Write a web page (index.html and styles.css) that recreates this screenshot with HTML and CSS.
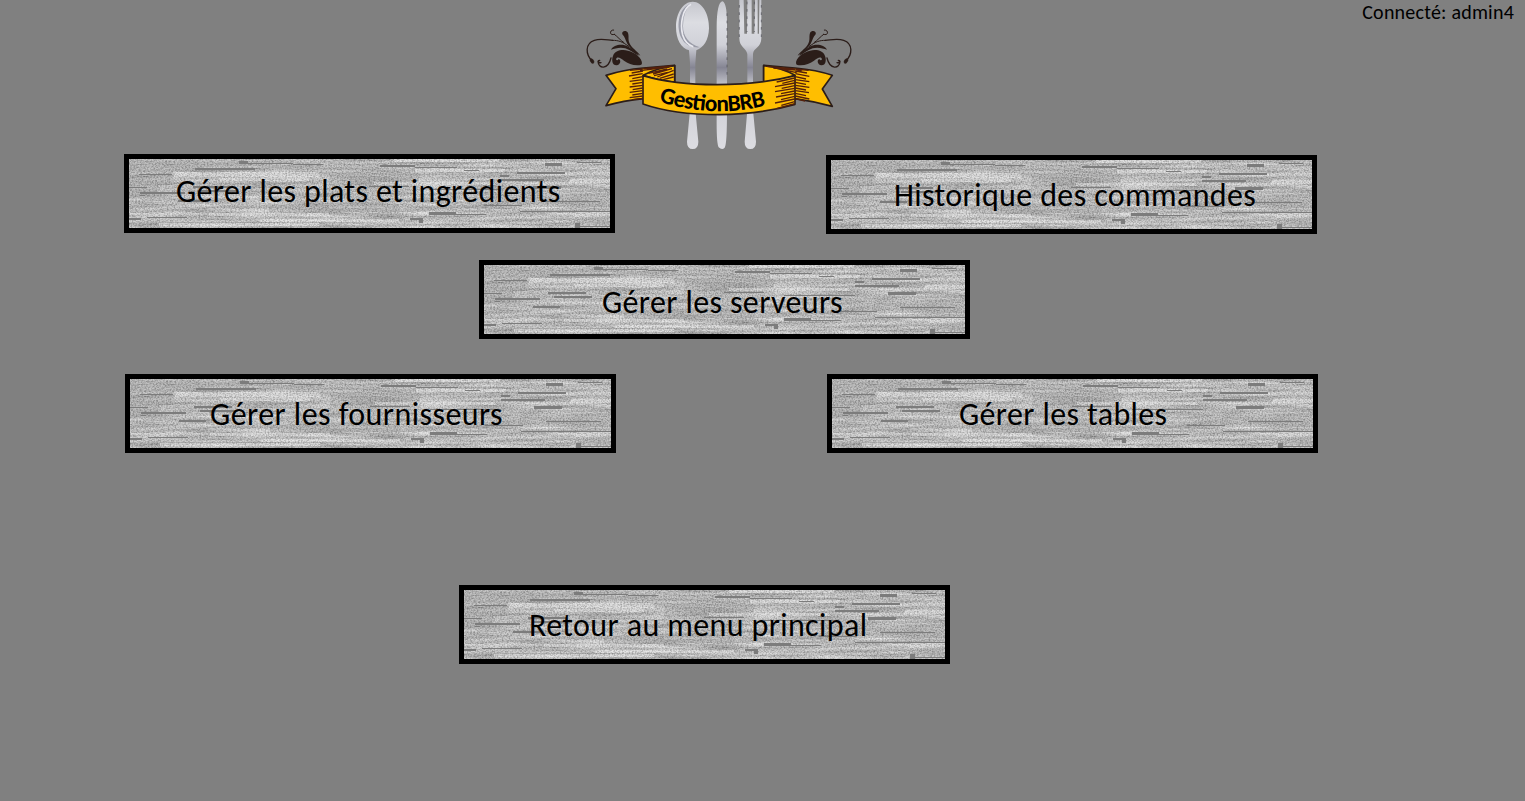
FILE: index.html
```html
<!DOCTYPE html>
<html lang="fr">
<head>
<meta charset="utf-8">
<title>GestionBRB</title>
<link rel="stylesheet" href="styles.css">
</head>
<body>
<svg class="defs" aria-hidden="true">
  <defs>
    <filter id="bands" x="0" y="0" width="100%" height="100%" color-interpolation-filters="sRGB">
      <feTurbulence type="fractalNoise" baseFrequency="0.018 0.3" numOctaves="2" seed="8"/>
      <feColorMatrix values=".42 0 0 0 0.52  .42 0 0 0 0.52  .42 0 0 0 0.52  0 0 0 0 1"/>
    </filter>
    <filter id="grain" x="0" y="0" width="100%" height="100%" color-interpolation-filters="sRGB">
      <feTurbulence type="fractalNoise" baseFrequency="0.6 0.75" numOctaves="2" seed="3"/>
      <feColorMatrix values="2.4 0 0 0 -0.52  2.4 0 0 0 -0.52  2.4 0 0 0 -0.52  0 0 0 0 1"/>
    </filter>
    <symbol id="wood" viewBox="0 0 481 69">
      <rect width="481" height="69" filter="url(#bands)"/>
      <g fill="#999" opacity=".4"><path d="M0 0h118v12H44v14H30v12H0zM390 34h91v14h-91zM160 5h90v6h-90zM200 14h90v15h-90zM140 45h130v8H140z"/></g>
      <g fill="#e8e8e8" opacity=".6"><path d="M45 13h145v5H45zM90 19h90v3H90zM265 0h105v3H265zM286 10h90v3h-90zM245 23h120v3H245zM80 54h120v3H80zM130 60h140v3H130zM440 20h41v4h-41zM444 55h37v3h-37zM30 64h160v3H30z"/></g>
      <rect width="481" height="69" filter="url(#grain)" opacity=".2"/>
      <path fill="#7c7c7c" d="M110 2h9v3h-9zM66 9h60v2H66zM118 4h46v1h-46zM164 5h30v1h-30zM251 6h35v2h-35zM286 8h42v1h-42zM335 11h15v1h-15zM416 4h17v3h-17zM448 3h24v1h-24zM388 13h48v2h-48zM371 16h9v2h-9zM371 20h44v2h-44zM404 27h28v3h-28zM10 15h33v1H10zM11 33h45v2H11zM11 36h5v1h-5zM0 28h18v1H0zM64 27h38v2H64zM70 31h38v2H70zM49 41h27v2H49zM240 27h40v1h-40zM300 30h71v1h-71zM300 53h27v3h-27zM327 55h30v1h-30zM281 59h13v2h-13zM290 61h4v3h-4zM446 64h5v5h-5zM451 67h30v1h-30zM18 58h40v1H18zM0 59h12v2H0zM416 42h55v1h-55zM391 52h90v1h-90zM355 46h38v1h-38z"/>
    </symbol>
    <linearGradient id="steel" gradientUnits="userSpaceOnUse" x1="0" y1="0" x2="0" y2="450">
      <stop offset="0" stop-color="#c4c5cc"/><stop offset=".15" stop-color="#dcdde2"/>
      <stop offset=".3" stop-color="#d0d1d8"/><stop offset=".45" stop-color="#858593"/>
      <stop offset=".58" stop-color="#cbccd2"/><stop offset="1" stop-color="#dddde2"/>
    </linearGradient>
    <g id="flourish" fill="#2b1d19" stroke="#2b1d19" stroke-linecap="round">
      <path stroke="none" d="M184 194C166 199 145 191 132 182C124 175 114 170 110 174C105 179 112 184 116 177C124 180 122 194 110 196C97 197 94 180 99 168C104 152 125 147 144 152C165 157 187 174 186 190z"/>
      <path stroke="none" d="M127 103C123 93 139 89 144 99C148 111 142 121 151 134C160 148 176 156 181 167C165 158 150 144 142 131C135 119 135 110 127 103z"/>
      <path stroke="none" d="M93 149C101 134 126 129 145 140C159 148 173 159 176 168C161 160 150 149 136 145C119 140 105 146 93 149z"/>
      <ellipse cx="36" cy="183" rx="5" ry="8" transform="rotate(-35 36 183)"/>
      <g fill="none" stroke-width="4"><path d="M36 182C17 164 14 131 43 121C60 115 76 119 98 121"/><path stroke-width="3" d="M98 121C116 121 128 125 147 140M103 103C87 109 88 88 101 90M103 103C113 110 121 121 132 128"/><path d="M63 188C56 190 51 180 59 181M54 184C55 207 84 210 93 174"/></g>
    </g>
  </defs>
</svg>

<header class="header">
  <svg class="logo" viewBox="0 0 840 450" role="img" aria-label="GestionBRB">
    <g fill="url(#steel)">
      <path d="M338 5C368 5 388 45 387 85C386 120 371 143 349 151L346 190V330L355 425Q355 447 338 447Q321 447 321 425L330 330V190L327 151C303 144 288 119 288 80C288 38 310 5 338 5z"/>
      <path d="M428 4C436 8 441 28 441 65V330Q441 435 434 443Q426 451 416 442Q409 430 410 350V80C410 35 416 4 428 4z"/>
      <path d="M484 0L491 0L493 101H501L502 0H515V101H523L525 0H533V101H537L538 0H544V115C544 143 521 143 519 162V330L528 425Q528 447 511 447Q494 447 494 425L502 330V162C499 144 478 142 478 115V0z"/>
    </g>
    <path d="M333 11C300 20 286 70 303 112Q318 145 359 142Q309 125 309 78Q309 33 333 11z" fill="#999ba7"/>
    <path d="M333 13C309 25 299 69 308 105Q316 132 340 140" fill="none" stroke="#e9e9ef" stroke-width="5"/>
    <path d="M441 40V225M478 15V118M544 15V118M501 5V96M523 5V96" fill="none" stroke="#4c4c54" stroke-width="2" stroke-dasharray="8 14"/>
    <use href="#flourish"/>
    <use href="#flourish" transform="translate(834 0) scale(-1 1)"/>
    <g fill="#ffbe00" stroke="#2b1d19" stroke-width="5" stroke-linejoin="round">
      <path d="M78 226Q130 209 190 204L284 196V245L190 296Q130 302 78 317L108 266z"/>
      <path d="M757 226Q710 210 645 204L551 196V245L645 296Q700 304 757 319L727 267z"/>
      <path d="M190 226Q230 204 284 197V247Q233 241 190 226z"/>
      <path d="M645 226Q605 203 551 197V248Q604 243 645 226z"/>
      <path d="M189 227Q280 254 410 254Q540 254 645 227V313Q540 343 417 344Q280 344 189 312z"/>
    </g>
    <g fill="none" stroke="#55200b" stroke-width="4">
      <path d="M150 211L188 207M155 219L189 213M147 228L188 221M157 236L188 230M149 244L188 239M157 252L188 247M149 261L188 256M158 269L188 264M149 277L188 272M157 285L188 280M149 293L188 288M157 299L188 295M190 206L275 198M180 212L268 201M205 220L262 207M219 222L276 206M222 227L263 217M232 231L281 211M239 235L281 222M249 239L281 231"/>
      <path d="M646 207L686 211M646 213L681 219M646 221L688 229M646 230L678 237M646 239L688 245M646 247L678 253M646 256L688 262M646 264L678 270M646 272L687 278M646 280L678 287M646 288L688 297M646 296L675 303M560 199L645 207M580 204L665 212M604 208L650 218"/>
      <path d="M644 234L590 246M644 241L607 250M644 249L585 260M644 257L605 265M644 265L585 275M644 273L603 281M644 281L588 291M644 289L603 299M644 297L585 309M644 305L604 316M644 311L589 326"/>
    </g>
    <path id="ribbon-line" d="M236 305Q410 358 568 313" fill="none"/>
    <text class="logo-text"><textPath href="#ribbon-line" textLength="326">GestionBRB</textPath></text>
  </svg>
  <p class="session">Connecté: admin4</p>
</header>

<main class="menu">
  <div class="row row-top">
    <button class="tile dishes"><svg class="wood"><use href="#wood"/></svg><span>Gérer les plats et ingrédients</span></button>
    <button class="tile history"><svg class="wood"><use href="#wood"/></svg><span>Historique des commandes</span></button>
  </div>
  <div class="row row-staff">
    <button class="tile staff"><svg class="wood"><use href="#wood"/></svg><span>Gérer les serveurs</span></button>
  </div>
  <div class="row row-supply">
    <button class="tile suppliers"><svg class="wood"><use href="#wood"/></svg><span>Gérer les fournisseurs</span></button>
    <button class="tile tables"><svg class="wood"><use href="#wood"/></svg><span>Gérer les tables</span></button>
  </div>
  <div class="row row-back">
    <button class="tile back"><svg class="wood"><use href="#wood"/></svg><span>Retour au menu principal</span></button>
  </div>
</main>
</body>
</html>
```
FILE: styles.css
```css
* { box-sizing: border-box; }
body {
  margin: 0;
  height: 801px;
  overflow: hidden;
  background: #808080;
  color: #000;
  font-family: Carlito, Lato, sans-serif;
}
.defs { position: absolute; width: 0; height: 0; }
.header {
  display: flex;
  justify-content: space-between;
  height: 154px;
  padding-left: 580px;
  padding-right: 11px;
}
.logo { width: 280px; height: 150px; }
.logo-text { font-family: Carlito, Lato, sans-serif; font-weight: 700; font-size: 70px; }
.session { margin: 0; font-size: 20px; line-height: 24px; letter-spacing: 0.22px; white-space: nowrap; }
.menu { display: flex; flex-direction: column; }
.row { display: flex; align-items: flex-start; gap: 211px; }
.row-top { height: 106px; padding-left: 124px; }
.row-staff { height: 114px; padding-left: 479px; }
.row-supply { height: 211px; padding-left: 125px; }
.row-back { padding-left: 459px; }
.tile {
  position: relative;
  flex: none;
  display: flex;
  align-items: flex-start;
  width: 491px;
  height: 79px;
  padding: 0;
  border: 5px solid #000;
  background: #b8b8b8;
  color: #000;
  font: inherit;
  font-size: 32px;
  line-height: 36px;
  letter-spacing: 0.38px;
  white-space: nowrap;
  overflow: hidden;
}
.tile span { position: relative; }
.wood { position: absolute; inset: 0; width: 481px; height: 69px; }
.dishes { padding: 15px 0 0 47px; }
.history { margin-top: 1px; padding: 18px 0 0 63px; }
.staff { padding: 20px 0 0 118px; }
.suppliers { padding: 18px 0 0 80px; letter-spacing: 0.45px; }
.tables { padding: 18px 0 0 127px; }
.back { padding: 18px 0 0 65px; }
```
